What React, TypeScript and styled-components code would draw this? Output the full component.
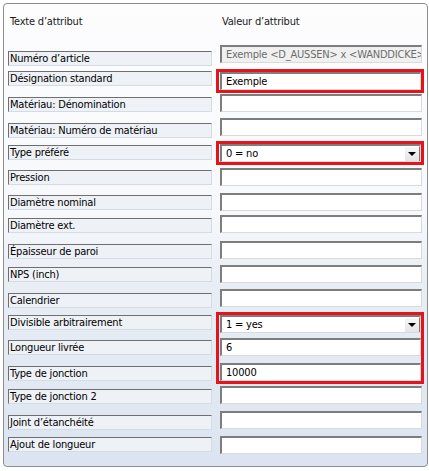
import styled, { createGlobalStyle } from "styled-components";

const GlobalStyle = createGlobalStyle`
  html, body {
    margin: 0;
    background: #ffffff;
  }
  body {
    font-family: "DejaVu Sans Condensed", "DejaVu Sans", sans-serif;
    font-size: 11px;
    letter-spacing: -0.2px;
    color: #000;
  }
`;

type Kind = "text" | "select" | "disabled";

type Attr = {
  label: string;
  value?: string;
  kind?: Kind;
  labelGap: number;
  fieldGap: number;
  group?: number;
};

const attrs: Attr[] = [
  { label: "Numéro d’article", value: "Exemple <D_AUSSEN> x <WANDDICKE>", kind: "disabled", labelGap: 6, fieldGap: 0 },
  { label: "Désignation standard", value: "Exemple", labelGap: 5, fieldGap: 9, group: 1 },
  { label: "Matériau: Dénomination", labelGap: 11, fieldGap: 4 },
  { label: "Matériau: Numéro de matériau", labelGap: 11, fieldGap: 6 },
  { label: "Type préféré", value: "0 = no", kind: "select", labelGap: 7, fieldGap: 8, group: 2 },
  { label: "Pression", labelGap: 10, fieldGap: 6 },
  { label: "Diamètre nominal", labelGap: 10, fieldGap: 7 },
  { label: "Diamètre ext.", labelGap: 8, fieldGap: 4 },
  { label: "Épaisseur de paroi", labelGap: 11, fieldGap: 8 },
  { label: "NPS (inch)", labelGap: 8, fieldGap: 6 },
  { label: "Calendrier", labelGap: 11, fieldGap: 6 },
  { label: "Divisible arbitrairement", value: "1 = yes", kind: "select", labelGap: 7, fieldGap: 8, group: 3 },
  { label: "Longueur livrée", value: "6", labelGap: 10, fieldGap: 5, group: 3 },
  { label: "Type de jonction", value: "10000", labelGap: 11, fieldGap: 7, group: 3 },
  { label: "Type de jonction 2", labelGap: 8, fieldGap: 5 },
  { label: "Joint d’étanchéité", labelGap: 11, fieldGap: 7 },
  { label: "Ajout de longueur", labelGap: 7, fieldGap: 7 },
];

const Panel = styled.div`
  box-sizing: border-box;
  margin: 3px;
  width: 425px;
  height: 464px;
  border: 1px solid #8d8d8d;
  border-radius: 4px;
  background: linear-gradient(#fdfdfe 0%, #f6f8fb 45%, #e9eef5 60%, #dbe4f0 100%);
  padding: 0 5px 0 4px;
`;

const Header = styled.div`
  display: grid;
  grid-template-columns: 204px 202px;
  column-gap: 8px;
  height: 41px;
  padding-top: 11px;
  box-sizing: border-box;
  line-height: 13px;
  color: #1a1a1a;
`;

const HeaderCell = styled.div`
  padding-left: 2px;
`;

const Columns = styled.div`
  display: flex;
  gap: 8px;
`;

const LabelColumn = styled.div`
  width: 204px;
  display: flex;
  flex-direction: column;
`;

const FieldColumn = styled.div`
  width: 202px;
  display: flex;
  flex-direction: column;
`;

const Label = styled.div<{ $gap: number }>`
  box-sizing: border-box;
  margin-top: ${(p) => p.$gap}px;
  height: 15px;
  line-height: 13px;
  padding-left: 1px;
  white-space: nowrap;
  overflow: hidden;
  background: #eef2f7;
  border-top: 1px solid #6f6f6f;
  border-left: 1px solid #6f6f6f;
  border-right: 1px solid #d5dbe3;
  border-bottom: 1px solid #d5dbe3;
`;

const Highlight = styled.div<{ $gap: number }>`
  margin: ${(p) => p.$gap - 3}px -2px -3px -4px;
  border: 3px solid #e5141c;
  padding: 0 0 0 1px;
  display: flex;
  flex-direction: column;
`;

const Field = styled.div<{ $gap: number; $disabled?: boolean }>`
  box-sizing: border-box;
  margin-top: ${(p) => p.$gap}px;
  height: 18px;
  display: flex;
  align-items: center;
  background: ${(p) => (p.$disabled ? "#f0f0f0" : "#ffffff")};
  color: ${(p) => (p.$disabled ? "#6d6d6d" : "#000000")};
  border-top: 2px solid #7d7d7d;
  border-left: 2px solid #7d7d7d;
  border-right: 1px solid #dadada;
  border-bottom: 1px solid #dadada;
  padding-left: 4px;
  white-space: nowrap;
  overflow: hidden;
`;

const Value = styled.span`
  flex: 1;
  overflow: hidden;
  line-height: 13px;
`;

const DropButton = styled.div`
  box-sizing: border-box;
  width: 16px;
  height: 16px;
  display: flex;
  align-items: center;
  justify-content: center;
  background: linear-gradient(#f7f7f7, #e4e4e4);
  border-top: 1px solid #ffffff;
  border-left: 1px solid #ffffff;
  border-right: 1px solid #7a7a7a;
  border-bottom: 1px solid #7a7a7a;
`;

const Arrow = styled.span`
  width: 0;
  height: 0;
  border-left: 4px solid transparent;
  border-right: 4px solid transparent;
  border-top: 4px solid #000;
`;

function FieldBox({ a, gap }: { a: Attr; gap: number }) {
  return (
    <Field $gap={gap} $disabled={a.kind === "disabled"}>
      <Value>{a.value ?? ""}</Value>
      {a.kind === "select" && (
        <DropButton>
          <Arrow />
        </DropButton>
      )}
    </Field>
  );
}

export default function App() {
  // group consecutive rows that share a red highlight
  const blocks: { group?: number; items: Attr[] }[] = [];
  attrs.forEach((a) => {
    const last = blocks[blocks.length - 1];
    if (a.group && last && last.group === a.group) last.items.push(a);
    else blocks.push({ group: a.group, items: [a] });
  });

  return (
    <>
      <GlobalStyle />
      <Panel>
        <Header>
          <HeaderCell>Texte d’attribut</HeaderCell>
          <HeaderCell>Valeur d’attribut</HeaderCell>
        </Header>
        <Columns>
          <LabelColumn>
            {attrs.map((a) => (
              <Label key={a.label} $gap={a.labelGap}>
                {a.label}
              </Label>
            ))}
          </LabelColumn>
          <FieldColumn>
            {blocks.map((b, i) =>
              b.group ? (
                <Highlight key={i} $gap={b.items[0].fieldGap}>
                  {b.items.map((a, j) => (
                    <FieldBox key={a.label} a={a} gap={j === 0 ? 0 : a.fieldGap} />
                  ))}
                </Highlight>
              ) : (
                <FieldBox key={i} a={b.items[0]} gap={b.items[0].fieldGap} />
              )
            )}
          </FieldColumn>
        </Columns>
      </Panel>
    </>
  );
}
